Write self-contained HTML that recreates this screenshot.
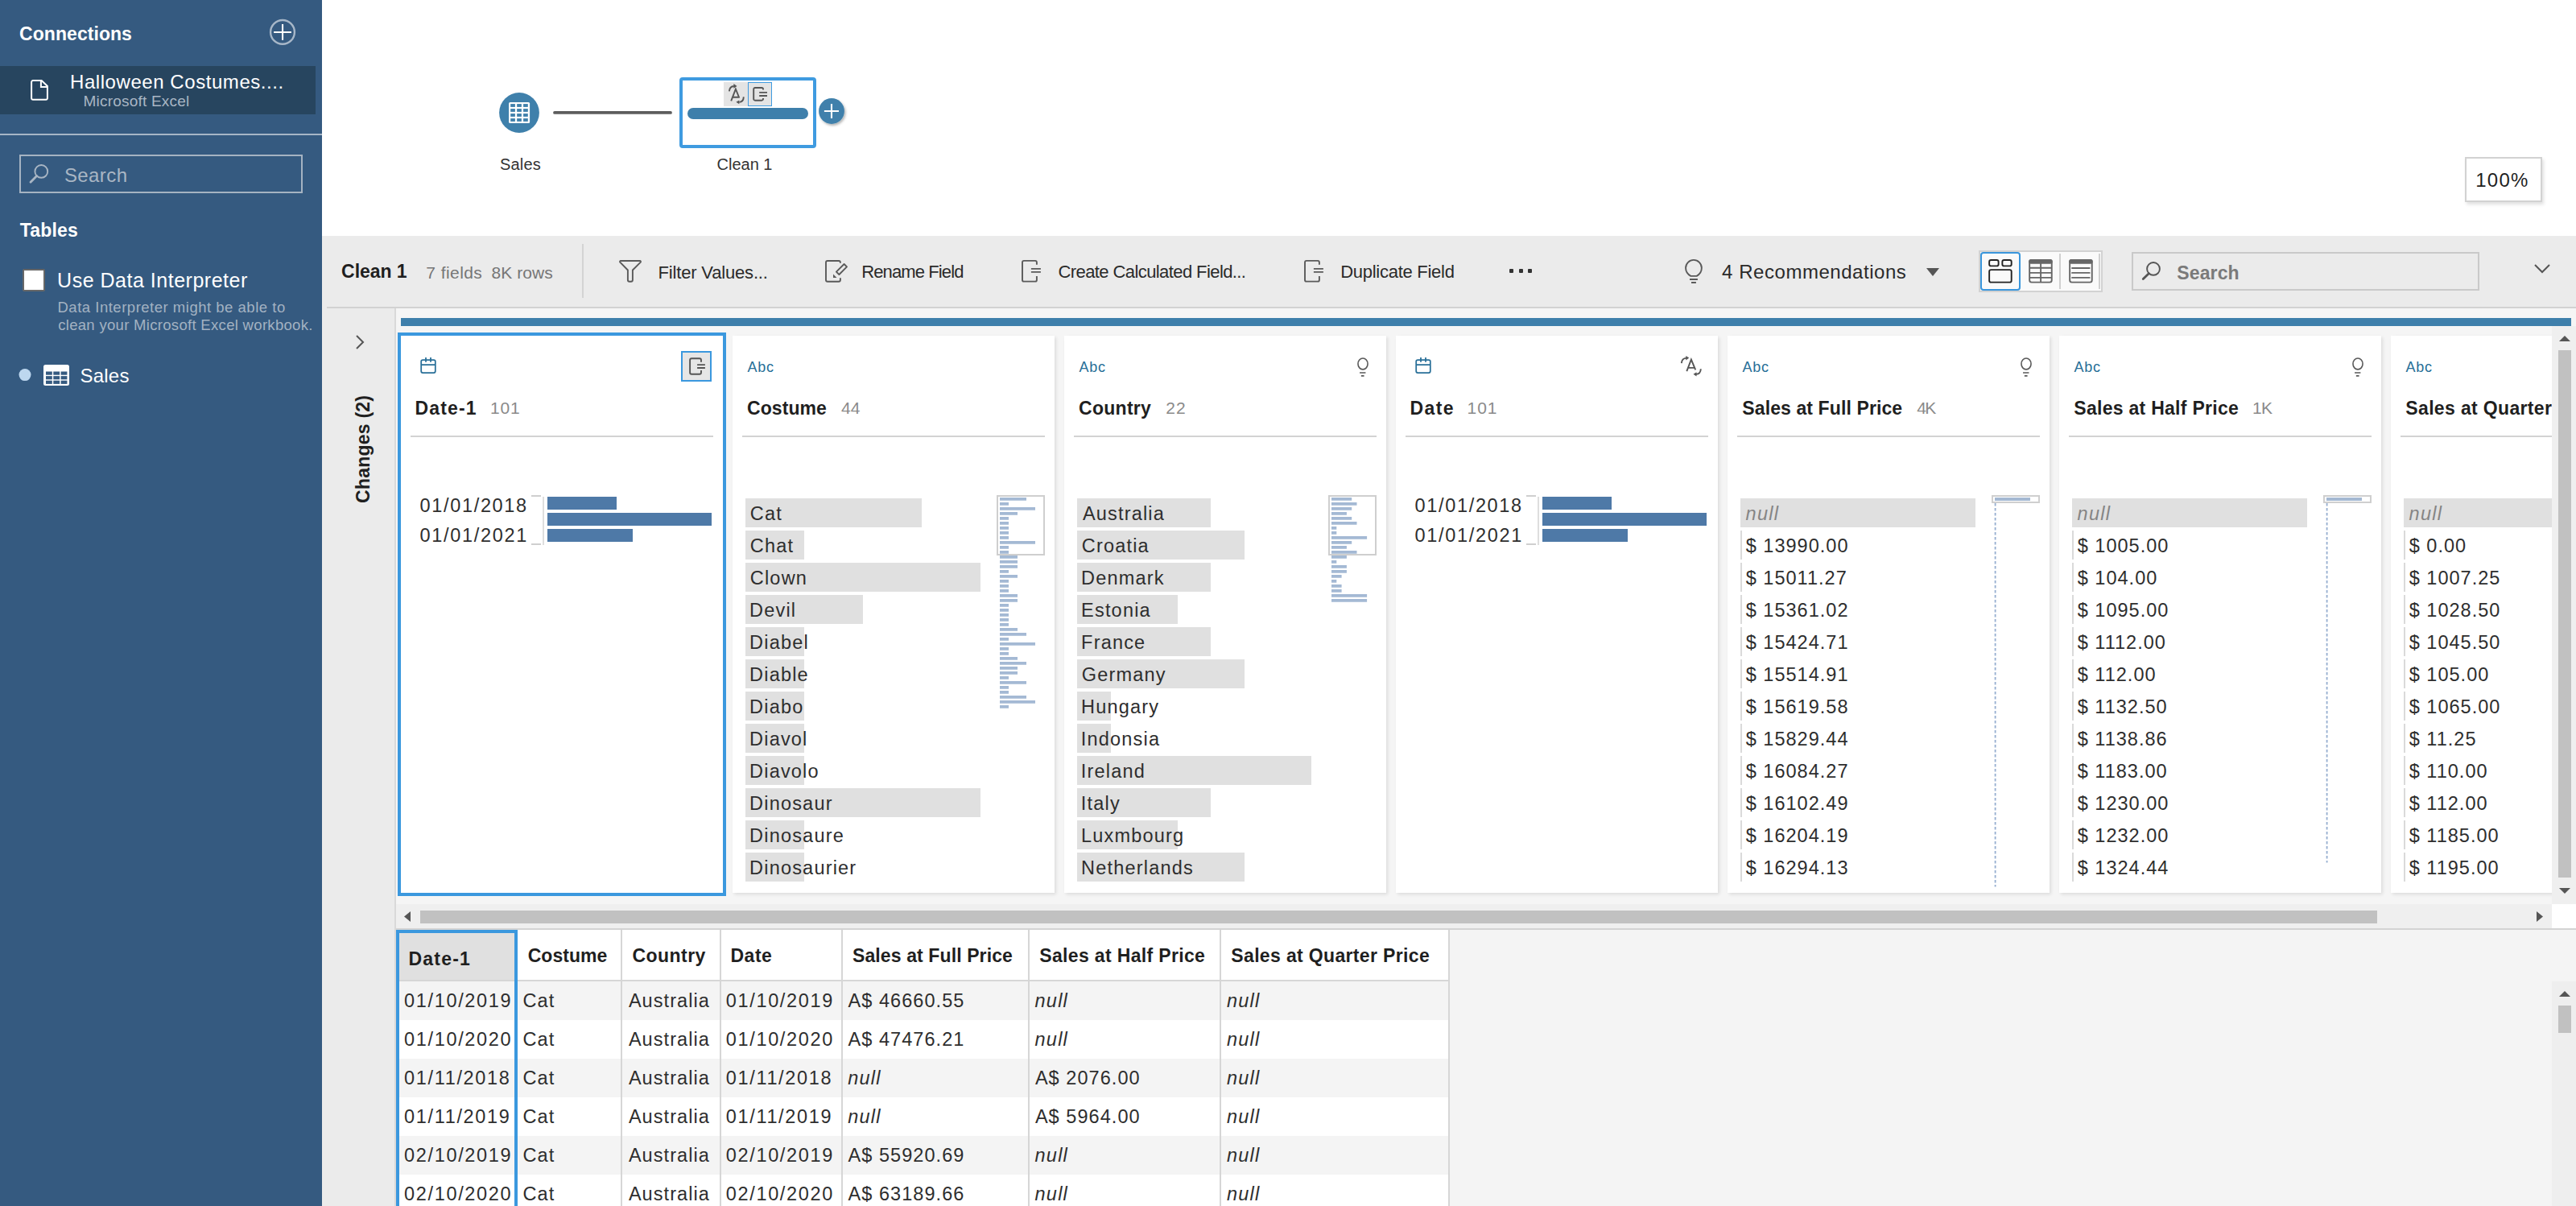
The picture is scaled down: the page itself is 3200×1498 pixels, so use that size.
<!DOCTYPE html>
<html><head><meta charset="utf-8"><title>Tableau Prep</title>
<style>
html,body{margin:0;padding:0;width:3200px;height:1498px;overflow:hidden;background:#fff;}
body{position:relative;font-family:"Liberation Sans",sans-serif;}
.t{position:absolute;white-space:nowrap;}
svg{overflow:visible;}
</style></head><body>
<div style="position:absolute;left:0px;top:0px;width:400px;height:1498px;background:#355a80;"></div>
<div class="t" style="left:24.1px;top:31.0px;font-size:23px;line-height:23px;color:#ffffff;font-weight:bold;letter-spacing:0.05px;">Connections</div>
<svg style="position:absolute;left:330px;top:20px;" width="42" height="42" viewBox="330 20 42 42"><circle cx="351" cy="39.9" r="14.9" fill="none" stroke="#a7b7c8" stroke-width="2.4"/><path d="M351.05 30.1V49.8M340.1 40.05H361.9" stroke="#fff" stroke-width="2.1"/></svg>
<div style="position:absolute;left:0px;top:82px;width:392px;height:60px;background:#27455f;"></div>
<svg style="position:absolute;left:30px;top:92px;" width="40" height="40" viewBox="30 92 40 40"><path d="M39.1 102V122a1.8 1.8 0 0 0 1.8 1.8H57.1a1.8 1.8 0 0 0 1.8-1.8V107L51.6 100.1H41a1.9 1.9 0 0 0-1.9 1.9Z" fill="none" stroke="#fff" stroke-width="2"/><path d="M50.9 100.1V107.9H58.9" fill="none" stroke="#fff" stroke-width="2"/></svg>
<div class="t" style="left:87.0px;top:90.2px;font-size:24px;line-height:24px;color:#ffffff;letter-spacing:0.56px;">Halloween Costumes....</div>
<div class="t" style="left:103.5px;top:116.4px;font-size:19px;line-height:19px;color:#a9b6c4;letter-spacing:0.21px;">Microsoft Excel</div>
<div style="position:absolute;left:0px;top:166px;width:400px;height:2px;background:#a6b6c6;"></div>
<div style="position:absolute;left:24px;top:192px;width:352px;height:48px;background:transparent;box-sizing:border-box;border:2px solid #a5b3c2;"></div>
<svg style="position:absolute;left:30px;top:198px;" width="40" height="40" viewBox="30 198 40 40"><circle cx="51.3" cy="212.9" r="7.9" fill="none" stroke="#a9b6c4" stroke-width="1.9"/><path d="M45.6 218.6L38 226.2" stroke="#a9b6c4" stroke-width="2.8" stroke-linecap="round"/></svg>
<div class="t" style="left:79.9px;top:206.2px;font-size:24px;line-height:24px;color:#a9b6c4;letter-spacing:0.42px;">Search</div>
<div class="t" style="left:24.8px;top:275.0px;font-size:23px;line-height:23px;color:#ffffff;font-weight:bold;letter-spacing:0.18px;">Tables</div>
<div style="position:absolute;left:28px;top:334px;width:28px;height:28px;background:#ffffff;box-sizing:border-box;border:2px solid #676767;border-radius:2px;"></div>
<div class="t" style="left:71.1px;top:336.3px;font-size:25px;line-height:25px;color:#ffffff;letter-spacing:0.51px;">Use Data Interpreter</div>
<div class="t" style="left:71.5px;top:373.3px;font-size:18.5px;line-height:18.5px;color:#a3b2c2;letter-spacing:0.51px;">Data Interpreter might be able to</div>
<div class="t" style="left:72.2px;top:395.4px;font-size:18.5px;line-height:18.5px;color:#a3b2c2;letter-spacing:0.31px;">clean your Microsoft Excel workbook.</div>
<svg style="position:absolute;left:23px;top:458px;" width="16" height="16" viewBox="0 0 16 16"><circle cx="8" cy="7.6" r="7.5" fill="#bdd7ef"/></svg>
<svg style="position:absolute;left:54px;top:453px;" width="32" height="26" viewBox="0 0 32 26"><rect x="0" y="0" width="32" height="26" rx="2.5" fill="#fff"/><rect x="3.0" y="8.5" width="7.8" height="4.2" fill="#355a80"/><rect x="12.3" y="8.5" width="7.8" height="4.2" fill="#355a80"/><rect x="21.6" y="8.5" width="7.8" height="4.2" fill="#355a80"/><rect x="3.0" y="14.1" width="7.8" height="4.2" fill="#355a80"/><rect x="12.3" y="14.1" width="7.8" height="4.2" fill="#355a80"/><rect x="21.6" y="14.1" width="7.8" height="4.2" fill="#355a80"/><rect x="3.0" y="19.7" width="7.8" height="4.2" fill="#355a80"/><rect x="12.3" y="19.7" width="7.8" height="4.2" fill="#355a80"/><rect x="21.6" y="19.7" width="7.8" height="4.2" fill="#355a80"/></svg>
<div class="t" style="left:99.4px;top:455.2px;font-size:24px;line-height:24px;color:#ffffff;letter-spacing:0.25px;">Sales</div>
<div style="position:absolute;left:400px;top:0px;width:2800px;height:293px;background:#ffffff;"></div>
<svg style="position:absolute;left:615px;top:110px;" width="60" height="60" viewBox="615 110 60 60"><circle cx="645" cy="140" r="24.9" fill="#3f80ab"/><rect x="632.1" y="126.9" width="26" height="26.2" rx="1.6" fill="#fff"/><rect x="634.20" y="129.10" width="5.7" height="3.8" fill="#3f80ab"/><rect x="642.15" y="129.10" width="5.7" height="3.8" fill="#3f80ab"/><rect x="650.10" y="129.10" width="5.7" height="3.8" fill="#3f80ab"/><rect x="634.20" y="135.10" width="5.7" height="3.8" fill="#3f80ab"/><rect x="642.15" y="135.10" width="5.7" height="3.8" fill="#3f80ab"/><rect x="650.10" y="135.10" width="5.7" height="3.8" fill="#3f80ab"/><rect x="634.20" y="141.10" width="5.7" height="3.8" fill="#3f80ab"/><rect x="642.15" y="141.10" width="5.7" height="3.8" fill="#3f80ab"/><rect x="650.10" y="141.10" width="5.7" height="3.8" fill="#3f80ab"/><rect x="634.20" y="147.10" width="5.7" height="3.8" fill="#3f80ab"/><rect x="642.15" y="147.10" width="5.7" height="3.8" fill="#3f80ab"/><rect x="650.10" y="147.10" width="5.7" height="3.8" fill="#3f80ab"/></svg>
<svg style="position:absolute;left:686px;top:136px;" width="150" height="8" viewBox="0 0 150 8"><line x1="3" y1="3.9" x2="147" y2="3.9" stroke="#5d5d5d" stroke-width="3.8" stroke-linecap="round"/></svg>
<div style="position:absolute;left:844px;top:96px;width:170px;height:88px;background:#fff;box-sizing:border-box;border:4px solid #3f9be0;border-radius:4px;"></div>
<div style="position:absolute;left:899px;top:102px;width:30px;height:30px;background:#e4e4e4;"></div>
<div style="position:absolute;left:929px;top:102px;width:30px;height:30px;background:#e4e4e4;box-sizing:border-box;border:1.5px solid #3f9be0;"></div>
<svg style="position:absolute;left:895px;top:98px;" width="70" height="38" viewBox="895 98 70 38"><g fill="none" stroke="#555" stroke-width="1.9"><path d="M908.2 125.4L913.9 110.6L918.3 121.5M910 120.7H918.5"/><path d="M905.9 113.4Q906.3 107.3 911.8 107"/><path d="M923.8 120.4Q923.5 126.6 918.3 126.9"/></g><path d="M911.4 104.1L915.5 107.1L911.4 109.7Z" fill="#555"/><path d="M918.3 124.5L914.4 126.8L918.3 129.2Z" fill="#555"/></svg>
<svg style="position:absolute;left:895px;top:98px;" width="70" height="38" viewBox="895 98 70 38"><g fill="none" stroke="#555" stroke-width="1.9"><path d="M948 111.6V110.8a1.8 1.8 0 0 0-1.8-1.8H938a1.8 1.8 0 0 0-1.8 1.8V122.9a1.8 1.8 0 0 0 1.8 1.8H946.2a1.8 1.8 0 0 0 1.8-1.8V122.1"/><path d="M943.2 114.9H953M943.2 119H953"/></g></svg>
<div style="position:absolute;left:854px;top:134px;width:150px;height:14px;background:#3e7fab;border-radius:7px;"></div>
<svg style="position:absolute;left:1010px;top:116px;" width="46" height="46" viewBox="1010 116 46 46"><defs><filter id="sh" x="-30%" y="-30%" width="160%" height="160%"><feDropShadow dx="1.5" dy="2" stdDeviation="1.6" flood-opacity="0.30"/></filter></defs><circle cx="1033" cy="138" r="15.9" fill="#3f80ab" filter="url(#sh)"/><path d="M1033 129V147.1M1023.9 138.05H1042" stroke="#fff" stroke-width="2.1"/></svg>
<div class="t" style="left:621.1px;top:193.6px;font-size:20px;line-height:20px;color:#333;letter-spacing:0.15px;">Sales</div>
<div class="t" style="left:890.5px;top:193.6px;font-size:20px;line-height:20px;color:#333;">Clean 1</div>
<div style="position:absolute;left:3062px;top:195px;width:96px;height:56px;background:#fff;box-sizing:border-box;border:2px solid #d2d2d2;box-shadow:2px 3px 4px rgba(0,0,0,0.12);"></div>
<div class="t" style="left:3075.2px;top:212.2px;font-size:24px;line-height:24px;color:#1f1f1f;letter-spacing:1.27px;">100%</div>
<div style="position:absolute;left:400px;top:293px;width:2800px;height:90px;background:#ebebeb;"></div>
<div style="position:absolute;left:406px;top:381px;width:2794px;height:1.6px;background:#d2d2d2;"></div>
<div class="t" style="left:424.1px;top:326.0px;font-size:23px;line-height:23px;color:#1f1f1f;font-weight:bold;letter-spacing:-0.05px;">Clean 1</div>
<div class="t" style="left:529.3px;top:327.7px;font-size:21px;line-height:21px;color:#767676;letter-spacing:0.43px;">7 fields</div>
<div class="t" style="left:610.6px;top:327.7px;font-size:21px;line-height:21px;color:#767676;letter-spacing:0.05px;">8K rows</div>
<div style="position:absolute;left:723px;top:303px;width:2px;height:67px;background:#d3d3d3;"></div>
<svg style="position:absolute;left:762px;top:315px;" width="40" height="40" viewBox="762 315 40 40"><path d="M771 324H795a1 1 0 0 1 .8 1.6L785.9 335.5V347.8a2 2 0 0 1-2 2H781.9a2 2 0 0 1-2-2V335.5L770.2 325.6a1 1 0 0 1 .8-1.6Z" fill="none" stroke="#5a5a5a" stroke-width="1.9" stroke-linejoin="round"/></svg>
<div class="t" style="left:817.5px;top:327.9px;font-size:22px;line-height:22px;color:#2a2a2a;letter-spacing:-0.17px;">Filter Values...</div>
<svg style="position:absolute;left:1020px;top:315px;" width="40" height="40" viewBox="1020 315 40 40"><g fill="none" stroke="#5a5a5a" stroke-width="1.9"><path d="M1043.9 326.8V326a2 2 0 0 0-2-2H1028a2 2 0 0 0-2 2V347.8a2 2 0 0 0 2 2H1041.9a2 2 0 0 0 2-2V345.2"/><path d="M1038.9 337.6L1048.6 328L1052 331.4L1042.4 341Z" stroke-linejoin="round"/></g><path d="M1035 340.5V345H1039.5Z" fill="#5a5a5a"/></svg>
<div class="t" style="left:1070.2px;top:327.3px;font-size:22px;line-height:22px;color:#2a2a2a;letter-spacing:-0.88px;">Rename Field</div>
<svg style="position:absolute;left:1265.1px;top:319.1px;" width="34" height="36" viewBox="1265.1 319.1 34 36"><g transform="translate(0 0)" fill="none" stroke="#5a5a5a" stroke-width="1.9"><path d="M1288 328.8V326a2 2 0 0 0-2-2H1272.1a2 2 0 0 0-2 2V347.75a2 2 0 0 0 2 2H1286a2 2 0 0 0 2-2V343"/><path d="M1281 334H1293M1281 338H1293"/></g></svg>
<div class="t" style="left:1314.5px;top:327.3px;font-size:22px;line-height:22px;color:#2a2a2a;letter-spacing:-0.59px;">Create Calculated Field...</div>
<svg style="position:absolute;left:1616.3px;top:319.1px;" width="34" height="36" viewBox="1265.1 319.1 34 36"><g transform="translate(0 0)" fill="none" stroke="#5a5a5a" stroke-width="1.9"><path d="M1288 328.8V326a2 2 0 0 0-2-2H1272.1a2 2 0 0 0-2 2V347.75a2 2 0 0 0 2 2H1286a2 2 0 0 0 2-2V343"/><path d="M1281 334H1293M1281 338H1293"/></g></svg>
<div class="t" style="left:1665.2px;top:327.3px;font-size:22px;line-height:22px;color:#2a2a2a;letter-spacing:-0.27px;">Duplicate Field</div>
<div style="position:absolute;left:1875px;top:333.5px;width:5px;height:5px;background:#333;border-radius:1px;"></div>
<div style="position:absolute;left:1886.5px;top:333.5px;width:5px;height:5px;background:#333;border-radius:1px;"></div>
<div style="position:absolute;left:1898px;top:333.5px;width:5px;height:5px;background:#333;border-radius:1px;"></div>
<svg style="position:absolute;left:2084px;top:315px;" width="40" height="40" viewBox="2084 315 40 40"><g fill="none" stroke="#5a5a5a" stroke-width="1.9"><path d="M2100.3 342.9C2096.3 340.6 2094.05 337 2094.05 332.8A9.9 9.9 0 0 1 2113.85 332.8C2113.85 337 2111.7 340.6 2107.7 342.9Z"/><path d="M2099 347H2108.9M2101 351H2106.9"/></g></svg>
<div class="t" style="left:2139.1px;top:326.1px;font-size:24px;line-height:24px;color:#2a2a2a;letter-spacing:0.54px;">4 Recommendations</div>
<svg style="position:absolute;left:2392px;top:332px;" width="18" height="12" viewBox="0 0 18 12"><path d="M1 1h16l-8 10z" fill="#555"/></svg>
<div style="position:absolute;left:2458px;top:311px;width:154px;height:52px;background:#fafafa;box-sizing:border-box;border:2px solid #d2d2d2;"></div>
<div style="position:absolute;left:2460px;top:313px;width:50px;height:48px;background:#fafafa;box-sizing:border-box;border:2px solid #3a96dc;border-radius:4px;"></div>
<div style="position:absolute;left:2557.7px;top:315px;width:2px;height:44px;background:#d0d0d0;"></div>
<div style="position:absolute;left:2607.4px;top:315px;width:2px;height:44px;background:#d0d0d0;"></div>
<svg style="position:absolute;left:2455px;top:305px;" width="160" height="63" viewBox="2455 305 160 63"><g fill="none" stroke="#222" stroke-width="1.9"><rect x="2471.15" y="323" width="11.45" height="7.4" rx="2.2"/><rect x="2487.35" y="323" width="11.35" height="7.4" rx="2.2"/><rect x="2471.15" y="335.15" width="27.55" height="15.45" rx="2.2"/></g></svg>
<svg style="position:absolute;left:2455px;top:305px;" width="160" height="63" viewBox="2455 305 160 63"><rect x="2521.15" y="322.95" width="27.6" height="27.7" rx="2.6" fill="none" stroke="#666" stroke-width="1.9"/><rect x="2520.2" y="322" width="29.5" height="5.7" rx="2.6" fill="#666"/><path d="M2521 332.8H2549M2521 338.9H2549M2521 344.9H2549M2535.1 327H2535.1V350" stroke="#666" stroke-width="1.9" fill="none"/></svg>
<svg style="position:absolute;left:2455px;top:305px;" width="160" height="63" viewBox="2455 305 160 63"><rect x="2571.15" y="322.95" width="27.6" height="27.7" rx="2.6" fill="none" stroke="#666" stroke-width="1.9"/><rect x="2570.2" y="322" width="29.5" height="5.7" rx="2.6" fill="#666"/><path d="M2574 333H2595.7M2574 338.9H2595.7M2574 344.9H2595.7" stroke="#666" stroke-width="1.9" fill="none" stroke-linecap="round"/></svg>
<div style="position:absolute;left:2648px;top:313px;width:432px;height:48px;background:transparent;box-sizing:border-box;border:2px solid #c9c9c9;"></div>
<svg style="position:absolute;left:2652px;top:318px;" width="40" height="40" viewBox="2652 318 40 40"><circle cx="2675" cy="333.9" r="7.9" fill="none" stroke="#555" stroke-width="1.9"/><path d="M2669.3 339.7L2662.3 346.6" stroke="#555" stroke-width="2.8" stroke-linecap="round"/></svg>
<div class="t" style="left:2704.3px;top:327.6px;font-size:23px;line-height:23px;color:#7a7a7a;font-weight:bold;letter-spacing:0.12px;">Search</div>
<svg style="position:absolute;left:3147px;top:327px;" width="22" height="15" viewBox="0 0 22 15"><path d="M2 2l9 9 9-9" fill="none" stroke="#555" stroke-width="2"/></svg>
<div style="position:absolute;left:400px;top:383px;width:91px;height:1115px;background:#ebebeb;"></div>
<div style="position:absolute;left:490px;top:383px;width:1.5px;height:1115px;background:#d9d9d9;"></div>
<svg style="position:absolute;left:440px;top:414px;" width="16" height="22" viewBox="0 0 16 22"><path d="M3 3l8 8-8 8" fill="none" stroke="#555" stroke-width="2"/></svg>
<div class="t" style="left:458.5px;top:624px;transform-origin:0 0;transform:rotate(-90deg);"><div style="position:relative;"><div class="t" style="white-space:nowrap;left:-0.9px;top:-19.0px;font-size:23px;line-height:23px;color:#1f1f1f;font-weight:bold;letter-spacing:0.22px;">Changes (2)</div>
</div></div>
<div style="position:absolute;left:491.5px;top:383px;width:2708.5px;height:770px;background:#f5f5f5;"></div>
<div style="position:absolute;left:498px;top:395px;width:2696px;height:10px;background:#3e7fab;"></div>
<div style="position:absolute;left:494px;top:413px;width:408px;height:700px;background:#fff;box-sizing:border-box;border:4px solid #3b98de;"></div>
<svg style="position:absolute;left:518px;top:440px;" width="28" height="28" viewBox="518 440 28 28"><g fill="none" stroke="#286f98" stroke-width="1.75"><path d="M523.2 449V461a2 2 0 0 0 2 2H538.8a2 2 0 0 0 2-2V449a2 2 0 0 0-2-2H525.2a2 2 0 0 0-2 2Z"/><path d="M523.2 453H540.8M529 444V449.7M535 444V449.7"/></g></svg>
<div style="position:absolute;left:846px;top:436px;width:38px;height:38px;background:#e6e6e6;box-sizing:border-box;border:2px solid #3b98de;"></div>
<svg style="position:absolute;left:850px;top:440px;" width="30" height="30" viewBox="850 440 30 30"><g fill="none" stroke="#555" stroke-width="1.9"><path d="M871 449.7V447.2a2 2 0 0 0-2-2H859.1a2 2 0 0 0-2 2V462.8a2 2 0 0 0 2 2H869a2 2 0 0 0 2-2V460"/><path d="M866.1 453.1H875.9M866.1 457H875.9"/></g></svg>
<div class="t" style="left:515.5px;top:496.0px;font-size:23px;line-height:23px;color:#1f1f1f;font-weight:bold;letter-spacing:1.16px;">Date-1</div>
<div class="t" style="left:608.9px;top:496.2px;font-size:21px;line-height:21px;color:#8a8a8a;letter-spacing:0.90px;">101</div>
<div style="position:absolute;left:510px;top:541px;width:376px;height:2px;background:#d3d3d3;"></div>
<div class="t" style="left:521.6px;top:616.6px;font-size:23.5px;line-height:23.5px;color:#2e2e2e;letter-spacing:1.66px;">01/01/2018</div>
<div class="t" style="left:521.6px;top:653.6px;font-size:23.5px;line-height:23.5px;color:#2e2e2e;letter-spacing:1.68px;">01/01/2021</div>
<div style="position:absolute;left:660px;top:615px;width:12px;height:2px;background:#cfcfcf;"></div>
<div style="position:absolute;left:660px;top:675px;width:12px;height:2px;background:#cfcfcf;"></div>
<div style="position:absolute;left:674px;top:617px;width:2px;height:60px;background:#dedede;"></div>
<div style="position:absolute;left:680px;top:617px;width:86px;height:16px;background:#4e79a7;"></div>
<div style="position:absolute;left:680px;top:637px;width:204px;height:16px;background:#4e79a7;"></div>
<div style="position:absolute;left:680px;top:657px;width:106px;height:16px;background:#4e79a7;"></div>
<div style="position:absolute;left:910px;top:417px;width:400px;height:692px;background:#fff;box-shadow:2px 2px 4px rgba(0,0,0,0.10);"></div>
<div class="t" style="left:928.5px;top:447.3px;font-size:18px;line-height:18px;color:#286f98;letter-spacing:0.75px;">Abc</div>
<div class="t" style="left:928.1px;top:496.0px;font-size:23px;line-height:23px;color:#1f1f1f;font-weight:bold;letter-spacing:0.05px;">Costume</div>
<div class="t" style="left:1045.0px;top:496.2px;font-size:21px;line-height:21px;color:#8a8a8a;">44</div>
<div style="position:absolute;left:922px;top:541px;width:376px;height:2px;background:#d3d3d3;"></div>
<div style="position:absolute;left:926px;top:619px;width:219px;height:36px;background:#e0e0e0;"></div>
<div class="t" style="left:931.8px;top:626.6px;font-size:23.5px;line-height:23.5px;color:#2e2e2e;letter-spacing:1.19px;">Cat</div>
<div style="position:absolute;left:926px;top:659px;width:73px;height:36px;background:#e0e0e0;"></div>
<div class="t" style="left:931.8px;top:666.6px;font-size:23.5px;line-height:23.5px;color:#2e2e2e;letter-spacing:1.19px;">Chat</div>
<div style="position:absolute;left:926px;top:699px;width:292px;height:36px;background:#e0e0e0;"></div>
<div class="t" style="left:931.8px;top:706.6px;font-size:23.5px;line-height:23.5px;color:#2e2e2e;letter-spacing:1.19px;">Clown</div>
<div style="position:absolute;left:926px;top:739px;width:146px;height:36px;background:#e0e0e0;"></div>
<div class="t" style="left:931.1px;top:746.6px;font-size:23.5px;line-height:23.5px;color:#2e2e2e;letter-spacing:1.19px;">Devil</div>
<div style="position:absolute;left:926px;top:779px;width:73px;height:36px;background:#e0e0e0;"></div>
<div class="t" style="left:931.1px;top:786.6px;font-size:23.5px;line-height:23.5px;color:#2e2e2e;letter-spacing:1.19px;">Diabel</div>
<div style="position:absolute;left:926px;top:819px;width:73px;height:36px;background:#e0e0e0;"></div>
<div class="t" style="left:931.1px;top:826.6px;font-size:23.5px;line-height:23.5px;color:#2e2e2e;letter-spacing:1.19px;">Diable</div>
<div style="position:absolute;left:926px;top:859px;width:73px;height:36px;background:#e0e0e0;"></div>
<div class="t" style="left:931.1px;top:866.6px;font-size:23.5px;line-height:23.5px;color:#2e2e2e;letter-spacing:1.19px;">Diabo</div>
<div style="position:absolute;left:926px;top:899px;width:73px;height:36px;background:#e0e0e0;"></div>
<div class="t" style="left:931.1px;top:906.6px;font-size:23.5px;line-height:23.5px;color:#2e2e2e;letter-spacing:1.19px;">Diavol</div>
<div style="position:absolute;left:926px;top:939px;width:73px;height:36px;background:#e0e0e0;"></div>
<div class="t" style="left:931.1px;top:946.6px;font-size:23.5px;line-height:23.5px;color:#2e2e2e;letter-spacing:1.19px;">Diavolo</div>
<div style="position:absolute;left:926px;top:979px;width:292px;height:36px;background:#e0e0e0;"></div>
<div class="t" style="left:931.1px;top:986.6px;font-size:23.5px;line-height:23.5px;color:#2e2e2e;letter-spacing:1.19px;">Dinosaur</div>
<div style="position:absolute;left:926px;top:1019px;width:73px;height:36px;background:#e0e0e0;"></div>
<div class="t" style="left:931.1px;top:1026.6px;font-size:23.5px;line-height:23.5px;color:#2e2e2e;letter-spacing:1.19px;">Dinosaure</div>
<div style="position:absolute;left:926px;top:1059px;width:73px;height:36px;background:#e0e0e0;"></div>
<div class="t" style="left:931.1px;top:1066.6px;font-size:23.5px;line-height:23.5px;color:#2e2e2e;letter-spacing:1.19px;">Dinosaurier</div>
<svg style="position:absolute;left:1242px;top:618.1px;" width="46" height="266" viewBox="0 0 46 266"><rect x="0" y="0.0" width="33.0" height="3.75" fill="#a4b9d4"/><rect x="0" y="6.0" width="11.0" height="3.75" fill="#a4b9d4"/><rect x="0" y="12.0" width="44.0" height="3.75" fill="#a4b9d4"/><rect x="0" y="18.0" width="22.0" height="3.75" fill="#a4b9d4"/><rect x="0" y="24.0" width="11.0" height="3.75" fill="#a4b9d4"/><rect x="0" y="30.0" width="11.0" height="3.75" fill="#a4b9d4"/><rect x="0" y="36.0" width="11.0" height="3.75" fill="#a4b9d4"/><rect x="0" y="42.0" width="11.0" height="3.75" fill="#a4b9d4"/><rect x="0" y="48.0" width="11.0" height="3.75" fill="#a4b9d4"/><rect x="0" y="54.0" width="44.0" height="3.75" fill="#a4b9d4"/><rect x="0" y="60.0" width="11.0" height="3.75" fill="#a4b9d4"/><rect x="0" y="66.0" width="11.0" height="3.75" fill="#a4b9d4"/><rect x="0" y="72.0" width="22.0" height="3.75" fill="#a4b9d4"/><rect x="0" y="78.0" width="22.0" height="3.75" fill="#a4b9d4"/><rect x="0" y="84.0" width="22.0" height="3.75" fill="#a4b9d4"/><rect x="0" y="90.0" width="11.0" height="3.75" fill="#a4b9d4"/><rect x="0" y="96.0" width="22.0" height="3.75" fill="#a4b9d4"/><rect x="0" y="102.0" width="11.0" height="3.75" fill="#a4b9d4"/><rect x="0" y="108.0" width="11.0" height="3.75" fill="#a4b9d4"/><rect x="0" y="114.0" width="11.0" height="3.75" fill="#a4b9d4"/><rect x="0" y="120.0" width="22.0" height="3.75" fill="#a4b9d4"/><rect x="0" y="126.0" width="22.0" height="3.75" fill="#a4b9d4"/><rect x="0" y="132.0" width="11.0" height="3.75" fill="#a4b9d4"/><rect x="0" y="138.0" width="11.0" height="3.75" fill="#a4b9d4"/><rect x="0" y="144.0" width="11.0" height="3.75" fill="#a4b9d4"/><rect x="0" y="150.0" width="11.0" height="3.75" fill="#a4b9d4"/><rect x="0" y="156.0" width="11.0" height="3.75" fill="#a4b9d4"/><rect x="0" y="162.0" width="22.0" height="3.75" fill="#a4b9d4"/><rect x="0" y="168.0" width="33.0" height="3.75" fill="#a4b9d4"/><rect x="0" y="174.0" width="11.0" height="3.75" fill="#a4b9d4"/><rect x="0" y="180.0" width="44.0" height="3.75" fill="#a4b9d4"/><rect x="0" y="186.0" width="11.0" height="3.75" fill="#a4b9d4"/><rect x="0" y="192.0" width="11.0" height="3.75" fill="#a4b9d4"/><rect x="0" y="198.0" width="22.0" height="3.75" fill="#a4b9d4"/><rect x="0" y="204.0" width="33.0" height="3.75" fill="#a4b9d4"/><rect x="0" y="210.0" width="22.0" height="3.75" fill="#a4b9d4"/><rect x="0" y="216.0" width="22.0" height="3.75" fill="#a4b9d4"/><rect x="0" y="222.0" width="11.0" height="3.75" fill="#a4b9d4"/><rect x="0" y="228.0" width="33.0" height="3.75" fill="#a4b9d4"/><rect x="0" y="234.0" width="11.0" height="3.75" fill="#a4b9d4"/><rect x="0" y="240.0" width="11.0" height="3.75" fill="#a4b9d4"/><rect x="0" y="246.0" width="33.0" height="3.75" fill="#a4b9d4"/><rect x="0" y="252.0" width="44.0" height="3.75" fill="#a4b9d4"/><rect x="0" y="258.0" width="11.0" height="3.75" fill="#a4b9d4"/></svg>
<div style="position:absolute;left:1238px;top:615px;width:60px;height:75px;background:transparent;box-sizing:border-box;border:2px solid #cfcfcf;"></div>
<div style="position:absolute;left:1322px;top:417px;width:400px;height:692px;background:#fff;box-shadow:2px 2px 4px rgba(0,0,0,0.10);"></div>
<div class="t" style="left:1340.5px;top:447.3px;font-size:18px;line-height:18px;color:#286f98;letter-spacing:0.75px;">Abc</div>
<svg style="position:absolute;left:1681.15px;top:440px;" width="24" height="30" viewBox="1681.15 440 24 30"><g fill="none" stroke="#5a5a5a" stroke-width="1.6"><ellipse cx="1693.15" cy="451.95" rx="6.05" ry="6.95"/><path d="M1689.20 463H1696.60M1691.00 466.9H1694.70"/></g></svg>
<div class="t" style="left:1340.1px;top:496.0px;font-size:23px;line-height:23px;color:#1f1f1f;font-weight:bold;letter-spacing:0.27px;">Country</div>
<div class="t" style="left:1448.3px;top:496.2px;font-size:21px;line-height:21px;color:#8a8a8a;letter-spacing:1.00px;">22</div>
<div style="position:absolute;left:1334px;top:541px;width:376px;height:2px;background:#d3d3d3;"></div>
<div style="position:absolute;left:1338px;top:619px;width:166.4px;height:36px;background:#e0e0e0;"></div>
<div class="t" style="left:1344.9px;top:626.6px;font-size:23.5px;line-height:23.5px;color:#2e2e2e;letter-spacing:1.19px;">Australia</div>
<div style="position:absolute;left:1338px;top:659px;width:208.0px;height:36px;background:#e0e0e0;"></div>
<div class="t" style="left:1343.8px;top:666.6px;font-size:23.5px;line-height:23.5px;color:#2e2e2e;letter-spacing:1.19px;">Croatia</div>
<div style="position:absolute;left:1338px;top:699px;width:166.4px;height:36px;background:#e0e0e0;"></div>
<div class="t" style="left:1343.1px;top:706.6px;font-size:23.5px;line-height:23.5px;color:#2e2e2e;letter-spacing:1.19px;">Denmark</div>
<div style="position:absolute;left:1338px;top:739px;width:124.80000000000001px;height:36px;background:#e0e0e0;"></div>
<div class="t" style="left:1343.1px;top:746.6px;font-size:23.5px;line-height:23.5px;color:#2e2e2e;letter-spacing:1.19px;">Estonia</div>
<div style="position:absolute;left:1338px;top:779px;width:166.4px;height:36px;background:#e0e0e0;"></div>
<div class="t" style="left:1343.1px;top:786.6px;font-size:23.5px;line-height:23.5px;color:#2e2e2e;letter-spacing:1.19px;">France</div>
<div style="position:absolute;left:1338px;top:819px;width:208.0px;height:36px;background:#e0e0e0;"></div>
<div class="t" style="left:1343.8px;top:826.6px;font-size:23.5px;line-height:23.5px;color:#2e2e2e;letter-spacing:1.19px;">Germany</div>
<div style="position:absolute;left:1338px;top:859px;width:41.6px;height:36px;background:#e0e0e0;"></div>
<div class="t" style="left:1343.1px;top:866.6px;font-size:23.5px;line-height:23.5px;color:#2e2e2e;letter-spacing:1.19px;">Hungary</div>
<div style="position:absolute;left:1338px;top:899px;width:41.6px;height:36px;background:#e0e0e0;"></div>
<div class="t" style="left:1342.8px;top:906.6px;font-size:23.5px;line-height:23.5px;color:#2e2e2e;letter-spacing:1.19px;">Indonsia</div>
<div style="position:absolute;left:1338px;top:939px;width:291.2px;height:36px;background:#e0e0e0;"></div>
<div class="t" style="left:1342.8px;top:946.6px;font-size:23.5px;line-height:23.5px;color:#2e2e2e;letter-spacing:1.19px;">Ireland</div>
<div style="position:absolute;left:1338px;top:979px;width:166.4px;height:36px;background:#e0e0e0;"></div>
<div class="t" style="left:1342.8px;top:986.6px;font-size:23.5px;line-height:23.5px;color:#2e2e2e;letter-spacing:1.19px;">Italy</div>
<div style="position:absolute;left:1338px;top:1019px;width:124.80000000000001px;height:36px;background:#e0e0e0;"></div>
<div class="t" style="left:1343.1px;top:1026.6px;font-size:23.5px;line-height:23.5px;color:#2e2e2e;letter-spacing:1.19px;">Luxmbourg</div>
<div style="position:absolute;left:1338px;top:1059px;width:208.0px;height:36px;background:#e0e0e0;"></div>
<div class="t" style="left:1343.1px;top:1066.6px;font-size:23.5px;line-height:23.5px;color:#2e2e2e;letter-spacing:1.19px;">Netherlands</div>
<svg style="position:absolute;left:1654px;top:618.1px;" width="46" height="136" viewBox="0 0 46 136"><rect x="0" y="0.0" width="25.2" height="3.75" fill="#a4b9d4"/><rect x="0" y="6.0" width="31.5" height="3.75" fill="#a4b9d4"/><rect x="0" y="12.0" width="25.2" height="3.75" fill="#a4b9d4"/><rect x="0" y="18.0" width="18.9" height="3.75" fill="#a4b9d4"/><rect x="0" y="24.0" width="25.2" height="3.75" fill="#a4b9d4"/><rect x="0" y="30.0" width="31.5" height="3.75" fill="#a4b9d4"/><rect x="0" y="36.0" width="6.3" height="3.75" fill="#a4b9d4"/><rect x="0" y="42.0" width="6.3" height="3.75" fill="#a4b9d4"/><rect x="0" y="48.0" width="44.1" height="3.75" fill="#a4b9d4"/><rect x="0" y="54.0" width="25.2" height="3.75" fill="#a4b9d4"/><rect x="0" y="60.0" width="18.9" height="3.75" fill="#a4b9d4"/><rect x="0" y="66.0" width="31.5" height="3.75" fill="#a4b9d4"/><rect x="0" y="72.0" width="18.9" height="3.75" fill="#a4b9d4"/><rect x="0" y="78.0" width="6.3" height="3.75" fill="#a4b9d4"/><rect x="0" y="84.0" width="18.9" height="3.75" fill="#a4b9d4"/><rect x="0" y="90.0" width="18.9" height="3.75" fill="#a4b9d4"/><rect x="0" y="96.0" width="12.6" height="3.75" fill="#a4b9d4"/><rect x="0" y="102.0" width="6.3" height="3.75" fill="#a4b9d4"/><rect x="0" y="108.0" width="12.6" height="3.75" fill="#a4b9d4"/><rect x="0" y="114.0" width="12.6" height="3.75" fill="#a4b9d4"/><rect x="0" y="120.0" width="44.1" height="3.75" fill="#a4b9d4"/><rect x="0" y="126.0" width="44.1" height="3.75" fill="#a4b9d4"/></svg>
<div style="position:absolute;left:1650px;top:615px;width:60px;height:75px;background:transparent;box-sizing:border-box;border:2px solid #cfcfcf;"></div>
<div style="position:absolute;left:1734px;top:417px;width:400px;height:692px;background:#fff;box-shadow:2px 2px 4px rgba(0,0,0,0.10);"></div>
<svg style="position:absolute;left:1754px;top:440px;" width="28" height="28" viewBox="1754 440 28 28"><g fill="none" stroke="#286f98" stroke-width="1.75"><path d="M1759.2 449V461a2 2 0 0 0 2 2H1774.8a2 2 0 0 0 2-2V449a2 2 0 0 0-2-2H1761.2a2 2 0 0 0-2 2Z"/><path d="M1759.2 453H1776.8M1765 444V449.7M1771 444V449.7"/></g></svg>
<svg style="position:absolute;left:2080px;top:435px;" width="44" height="40" viewBox="2080 435 44 40"><g transform="translate(0 0)"><g fill="none" stroke="#555" stroke-width="1.9"><path d="M2095.3 461.2L2100.9 446.6L2106.2 459.4M2097.2 456.9H2104.5"/><path d="M2088.8 451.2Q2089.3 445 2095 444.6"/><path d="M2112.8 458.2Q2112.5 464.6 2107 464.8"/></g><path d="M2094.3 442.1L2098.2 444.6L2094.3 447.4Z" fill="#555"/><path d="M2107.5 462.2L2103.5 464.8L2107.5 467.5Z" fill="#555"/></g></svg>
<div class="t" style="left:1751.5px;top:496.0px;font-size:23px;line-height:23px;color:#1f1f1f;font-weight:bold;letter-spacing:1.37px;">Date</div>
<div class="t" style="left:1822.6px;top:496.2px;font-size:21px;line-height:21px;color:#8a8a8a;letter-spacing:0.90px;">101</div>
<div style="position:absolute;left:1746px;top:541px;width:376px;height:2px;background:#d3d3d3;"></div>
<div class="t" style="left:1757.6px;top:616.6px;font-size:23.5px;line-height:23.5px;color:#2e2e2e;letter-spacing:1.66px;">01/01/2018</div>
<div class="t" style="left:1757.6px;top:653.6px;font-size:23.5px;line-height:23.5px;color:#2e2e2e;letter-spacing:1.68px;">01/01/2021</div>
<div style="position:absolute;left:1896px;top:615px;width:12px;height:2px;background:#cfcfcf;"></div>
<div style="position:absolute;left:1896px;top:675px;width:12px;height:2px;background:#cfcfcf;"></div>
<div style="position:absolute;left:1910px;top:617px;width:2px;height:60px;background:#dedede;"></div>
<div style="position:absolute;left:1916px;top:617px;width:86px;height:16px;background:#4e79a7;"></div>
<div style="position:absolute;left:1916px;top:637px;width:204px;height:16px;background:#4e79a7;"></div>
<div style="position:absolute;left:1916px;top:657px;width:106px;height:16px;background:#4e79a7;"></div>
<div style="position:absolute;left:2146px;top:417px;width:400px;height:692px;background:#fff;box-shadow:2px 2px 4px rgba(0,0,0,0.10);"></div>
<div class="t" style="left:2164.5px;top:447.3px;font-size:18px;line-height:18px;color:#286f98;letter-spacing:0.75px;">Abc</div>
<svg style="position:absolute;left:2505.15px;top:440px;" width="24" height="30" viewBox="2505.15 440 24 30"><g fill="none" stroke="#5a5a5a" stroke-width="1.6"><ellipse cx="2517.15" cy="451.95" rx="6.05" ry="6.95"/><path d="M2513.20 463H2520.60M2515.00 466.9H2518.70"/></g></svg>
<div class="t" style="left:2164.3px;top:496.0px;font-size:23px;line-height:23px;color:#1f1f1f;font-weight:bold;letter-spacing:0.11px;">Sales at Full Price</div>
<div class="t" style="left:2381.3px;top:496.2px;font-size:21px;line-height:21px;color:#8a8a8a;letter-spacing:-1.70px;">4K</div>
<div style="position:absolute;left:2158px;top:541px;width:376px;height:2px;background:#d3d3d3;"></div>
<div style="position:absolute;left:2162px;top:619px;width:292px;height:36px;background:#e0e0e0;"></div>
<div class="t" style="left:2168.6px;top:626.6px;font-size:23.5px;line-height:23.5px;color:#858585;font-style:italic;letter-spacing:1.30px;">null</div>
<div style="position:absolute;left:2162px;top:659px;width:2px;height:36px;background:#dadada;"></div>
<div class="t" style="left:2168.7px;top:666.6px;font-size:23.5px;line-height:23.5px;color:#2e2e2e;letter-spacing:1.02px;">$ 13990.00</div>
<div style="position:absolute;left:2162px;top:699px;width:2px;height:36px;background:#dadada;"></div>
<div class="t" style="left:2168.7px;top:706.6px;font-size:23.5px;line-height:23.5px;color:#2e2e2e;letter-spacing:1.02px;">$ 15011.27</div>
<div style="position:absolute;left:2162px;top:739px;width:2px;height:36px;background:#dadada;"></div>
<div class="t" style="left:2168.7px;top:746.6px;font-size:23.5px;line-height:23.5px;color:#2e2e2e;letter-spacing:1.02px;">$ 15361.02</div>
<div style="position:absolute;left:2162px;top:779px;width:2px;height:36px;background:#dadada;"></div>
<div class="t" style="left:2168.7px;top:786.6px;font-size:23.5px;line-height:23.5px;color:#2e2e2e;letter-spacing:1.02px;">$ 15424.71</div>
<div style="position:absolute;left:2162px;top:819px;width:2px;height:36px;background:#dadada;"></div>
<div class="t" style="left:2168.7px;top:826.6px;font-size:23.5px;line-height:23.5px;color:#2e2e2e;letter-spacing:1.02px;">$ 15514.91</div>
<div style="position:absolute;left:2162px;top:859px;width:2px;height:36px;background:#dadada;"></div>
<div class="t" style="left:2168.7px;top:866.6px;font-size:23.5px;line-height:23.5px;color:#2e2e2e;letter-spacing:1.02px;">$ 15619.58</div>
<div style="position:absolute;left:2162px;top:899px;width:2px;height:36px;background:#dadada;"></div>
<div class="t" style="left:2168.7px;top:906.6px;font-size:23.5px;line-height:23.5px;color:#2e2e2e;letter-spacing:1.02px;">$ 15829.44</div>
<div style="position:absolute;left:2162px;top:939px;width:2px;height:36px;background:#dadada;"></div>
<div class="t" style="left:2168.7px;top:946.6px;font-size:23.5px;line-height:23.5px;color:#2e2e2e;letter-spacing:1.02px;">$ 16084.27</div>
<div style="position:absolute;left:2162px;top:979px;width:2px;height:36px;background:#dadada;"></div>
<div class="t" style="left:2168.7px;top:986.6px;font-size:23.5px;line-height:23.5px;color:#2e2e2e;letter-spacing:1.02px;">$ 16102.49</div>
<div style="position:absolute;left:2162px;top:1019px;width:2px;height:36px;background:#dadada;"></div>
<div class="t" style="left:2168.7px;top:1026.6px;font-size:23.5px;line-height:23.5px;color:#2e2e2e;letter-spacing:1.02px;">$ 16204.19</div>
<div style="position:absolute;left:2162px;top:1059px;width:2px;height:36px;background:#dadada;"></div>
<div class="t" style="left:2168.7px;top:1066.6px;font-size:23.5px;line-height:23.5px;color:#2e2e2e;letter-spacing:1.02px;">$ 16294.13</div>
<div style="position:absolute;left:2474px;top:615px;width:60px;height:10px;background:transparent;box-sizing:border-box;border:2px solid #cfcfcf;"></div>
<div style="position:absolute;left:2478px;top:618px;width:44px;height:4px;background:#a4b8d2;"></div>
<svg style="position:absolute;left:2477px;top:625px;" width="3" height="476.5"><line x1="1.6" y1="0" x2="1.6" y2="476.5" stroke="#96aed0" stroke-width="1.8" stroke-dasharray="3.5 2.5"/></svg>
<div style="position:absolute;left:2558px;top:417px;width:400px;height:692px;background:#fff;box-shadow:2px 2px 4px rgba(0,0,0,0.10);"></div>
<div class="t" style="left:2576.5px;top:447.3px;font-size:18px;line-height:18px;color:#286f98;letter-spacing:0.75px;">Abc</div>
<svg style="position:absolute;left:2917.15px;top:440px;" width="24" height="30" viewBox="2917.15 440 24 30"><g fill="none" stroke="#5a5a5a" stroke-width="1.6"><ellipse cx="2929.15" cy="451.95" rx="6.05" ry="6.95"/><path d="M2925.20 463H2932.60M2927.00 466.9H2930.70"/></g></svg>
<div class="t" style="left:2576.3px;top:496.0px;font-size:23px;line-height:23px;color:#1f1f1f;font-weight:bold;letter-spacing:0.28px;">Sales at Half Price</div>
<div class="t" style="left:2797.9px;top:496.2px;font-size:21px;line-height:21px;color:#8a8a8a;letter-spacing:-0.60px;">1K</div>
<div style="position:absolute;left:2570px;top:541px;width:376px;height:2px;background:#d3d3d3;"></div>
<div style="position:absolute;left:2574px;top:619px;width:292px;height:36px;background:#e0e0e0;"></div>
<div class="t" style="left:2580.6px;top:626.6px;font-size:23.5px;line-height:23.5px;color:#858585;font-style:italic;letter-spacing:1.30px;">null</div>
<div style="position:absolute;left:2574px;top:659px;width:2px;height:36px;background:#dadada;"></div>
<div class="t" style="left:2580.7px;top:666.6px;font-size:23.5px;line-height:23.5px;color:#2e2e2e;letter-spacing:1.02px;">$ 1005.00</div>
<div style="position:absolute;left:2574px;top:699px;width:2px;height:36px;background:#dadada;"></div>
<div class="t" style="left:2580.7px;top:706.6px;font-size:23.5px;line-height:23.5px;color:#2e2e2e;letter-spacing:1.02px;">$ 104.00</div>
<div style="position:absolute;left:2574px;top:739px;width:2px;height:36px;background:#dadada;"></div>
<div class="t" style="left:2580.7px;top:746.6px;font-size:23.5px;line-height:23.5px;color:#2e2e2e;letter-spacing:1.02px;">$ 1095.00</div>
<div style="position:absolute;left:2574px;top:779px;width:2px;height:36px;background:#dadada;"></div>
<div class="t" style="left:2580.7px;top:786.6px;font-size:23.5px;line-height:23.5px;color:#2e2e2e;letter-spacing:1.02px;">$ 1112.00</div>
<div style="position:absolute;left:2574px;top:819px;width:2px;height:36px;background:#dadada;"></div>
<div class="t" style="left:2580.7px;top:826.6px;font-size:23.5px;line-height:23.5px;color:#2e2e2e;letter-spacing:1.02px;">$ 112.00</div>
<div style="position:absolute;left:2574px;top:859px;width:2px;height:36px;background:#dadada;"></div>
<div class="t" style="left:2580.7px;top:866.6px;font-size:23.5px;line-height:23.5px;color:#2e2e2e;letter-spacing:1.02px;">$ 1132.50</div>
<div style="position:absolute;left:2574px;top:899px;width:2px;height:36px;background:#dadada;"></div>
<div class="t" style="left:2580.7px;top:906.6px;font-size:23.5px;line-height:23.5px;color:#2e2e2e;letter-spacing:1.02px;">$ 1138.86</div>
<div style="position:absolute;left:2574px;top:939px;width:2px;height:36px;background:#dadada;"></div>
<div class="t" style="left:2580.7px;top:946.6px;font-size:23.5px;line-height:23.5px;color:#2e2e2e;letter-spacing:1.02px;">$ 1183.00</div>
<div style="position:absolute;left:2574px;top:979px;width:2px;height:36px;background:#dadada;"></div>
<div class="t" style="left:2580.7px;top:986.6px;font-size:23.5px;line-height:23.5px;color:#2e2e2e;letter-spacing:1.02px;">$ 1230.00</div>
<div style="position:absolute;left:2574px;top:1019px;width:2px;height:36px;background:#dadada;"></div>
<div class="t" style="left:2580.7px;top:1026.6px;font-size:23.5px;line-height:23.5px;color:#2e2e2e;letter-spacing:1.02px;">$ 1232.00</div>
<div style="position:absolute;left:2574px;top:1059px;width:2px;height:36px;background:#dadada;"></div>
<div class="t" style="left:2580.7px;top:1066.6px;font-size:23.5px;line-height:23.5px;color:#2e2e2e;letter-spacing:1.02px;">$ 1324.44</div>
<div style="position:absolute;left:2886px;top:615px;width:60px;height:10px;background:transparent;box-sizing:border-box;border:2px solid #cfcfcf;"></div>
<div style="position:absolute;left:2890px;top:618px;width:44px;height:4px;background:#a4b8d2;"></div>
<svg style="position:absolute;left:2889px;top:625px;" width="3" height="446.5"><line x1="1.6" y1="0" x2="1.6" y2="446.5" stroke="#96aed0" stroke-width="1.8" stroke-dasharray="3.5 2.5"/></svg>
<div style="position:absolute;left:2970px;top:417px;width:400px;height:692px;background:#fff;box-shadow:2px 2px 4px rgba(0,0,0,0.10);"></div>
<div class="t" style="left:2988.5px;top:447.3px;font-size:18px;line-height:18px;color:#286f98;letter-spacing:0.75px;">Abc</div>
<div class="t" style="left:2988.3px;top:496.0px;font-size:23px;line-height:23px;color:#1f1f1f;font-weight:bold;letter-spacing:0.35px;">Sales at Quarter Price</div>
<div class="t" style="left:3251.9px;top:496.2px;font-size:21px;line-height:21px;color:#8a8a8a;letter-spacing:-0.60px;">1K</div>
<div style="position:absolute;left:2982px;top:541px;width:376px;height:2px;background:#d3d3d3;"></div>
<div style="position:absolute;left:2986px;top:619px;width:292px;height:36px;background:#e0e0e0;"></div>
<div class="t" style="left:2992.6px;top:626.6px;font-size:23.5px;line-height:23.5px;color:#858585;font-style:italic;letter-spacing:1.30px;">null</div>
<div style="position:absolute;left:2986px;top:659px;width:2px;height:36px;background:#dadada;"></div>
<div class="t" style="left:2992.7px;top:666.6px;font-size:23.5px;line-height:23.5px;color:#2e2e2e;letter-spacing:1.02px;">$ 0.00</div>
<div style="position:absolute;left:2986px;top:699px;width:2px;height:36px;background:#dadada;"></div>
<div class="t" style="left:2992.7px;top:706.6px;font-size:23.5px;line-height:23.5px;color:#2e2e2e;letter-spacing:1.02px;">$ 1007.25</div>
<div style="position:absolute;left:2986px;top:739px;width:2px;height:36px;background:#dadada;"></div>
<div class="t" style="left:2992.7px;top:746.6px;font-size:23.5px;line-height:23.5px;color:#2e2e2e;letter-spacing:1.02px;">$ 1028.50</div>
<div style="position:absolute;left:2986px;top:779px;width:2px;height:36px;background:#dadada;"></div>
<div class="t" style="left:2992.7px;top:786.6px;font-size:23.5px;line-height:23.5px;color:#2e2e2e;letter-spacing:1.02px;">$ 1045.50</div>
<div style="position:absolute;left:2986px;top:819px;width:2px;height:36px;background:#dadada;"></div>
<div class="t" style="left:2992.7px;top:826.6px;font-size:23.5px;line-height:23.5px;color:#2e2e2e;letter-spacing:1.02px;">$ 105.00</div>
<div style="position:absolute;left:2986px;top:859px;width:2px;height:36px;background:#dadada;"></div>
<div class="t" style="left:2992.7px;top:866.6px;font-size:23.5px;line-height:23.5px;color:#2e2e2e;letter-spacing:1.02px;">$ 1065.00</div>
<div style="position:absolute;left:2986px;top:899px;width:2px;height:36px;background:#dadada;"></div>
<div class="t" style="left:2992.7px;top:906.6px;font-size:23.5px;line-height:23.5px;color:#2e2e2e;letter-spacing:1.02px;">$ 11.25</div>
<div style="position:absolute;left:2986px;top:939px;width:2px;height:36px;background:#dadada;"></div>
<div class="t" style="left:2992.7px;top:946.6px;font-size:23.5px;line-height:23.5px;color:#2e2e2e;letter-spacing:1.02px;">$ 110.00</div>
<div style="position:absolute;left:2986px;top:979px;width:2px;height:36px;background:#dadada;"></div>
<div class="t" style="left:2992.7px;top:986.6px;font-size:23.5px;line-height:23.5px;color:#2e2e2e;letter-spacing:1.02px;">$ 112.00</div>
<div style="position:absolute;left:2986px;top:1019px;width:2px;height:36px;background:#dadada;"></div>
<div class="t" style="left:2992.7px;top:1026.6px;font-size:23.5px;line-height:23.5px;color:#2e2e2e;letter-spacing:1.02px;">$ 1185.00</div>
<div style="position:absolute;left:2986px;top:1059px;width:2px;height:36px;background:#dadada;"></div>
<div class="t" style="left:2992.7px;top:1066.6px;font-size:23.5px;line-height:23.5px;color:#2e2e2e;letter-spacing:1.02px;">$ 1195.00</div>
<div style="position:absolute;left:3298px;top:615px;width:60px;height:10px;background:transparent;box-sizing:border-box;border:2px solid #cfcfcf;"></div>
<div style="position:absolute;left:3302px;top:618px;width:44px;height:4px;background:#a4b8d2;"></div>
<svg style="position:absolute;left:3301px;top:625px;" width="3" height="476.5"><line x1="1.6" y1="0" x2="1.6" y2="476.5" stroke="#96aed0" stroke-width="1.8" stroke-dasharray="3.5 2.5"/></svg>
<div style="position:absolute;left:3170px;top:405px;width:30px;height:718px;background:#efefef;"></div>
<svg style="position:absolute;left:3178px;top:416px;" width="16" height="10" viewBox="0 0 16 10"><path d="M1 8h14L8 1z" fill="#555"/></svg>
<div style="position:absolute;left:3178px;top:435px;width:16px;height:655px;background:#c1c1c1;"></div>
<svg style="position:absolute;left:3178px;top:1102px;" width="16" height="10" viewBox="0 0 16 10"><path d="M1 1h14L8 8z" fill="#555"/></svg>
<div style="position:absolute;left:491.5px;top:1123px;width:2678.5px;height:30px;background:#efefef;"></div>
<svg style="position:absolute;left:501px;top:1131px;" width="10" height="15" viewBox="0 0 10 15"><path d="M9 1v13L1 7.5z" fill="#555"/></svg>
<div style="position:absolute;left:522px;top:1131px;width:2431px;height:16px;background:#c1c1c1;"></div>
<svg style="position:absolute;left:3150px;top:1131px;" width="10" height="15" viewBox="0 0 10 15"><path d="M1 1v13l8-6.5z" fill="#555"/></svg>
<div style="position:absolute;left:3170px;top:1123px;width:30px;height:30px;background:#ffffff;"></div>
<div style="position:absolute;left:491.5px;top:1153px;width:2708.5px;height:2px;background:#d3d3d3;"></div>
<div style="position:absolute;left:491.5px;top:1155px;width:2708.5px;height:343px;background:#f4f4f4;"></div>
<div style="position:absolute;left:491.5px;top:1155px;width:1308.5px;height:343px;background:#ffffff;"></div>
<div style="position:absolute;left:491.5px;top:1219px;width:1308.5px;height:48px;background:#f4f4f4;"></div>
<div style="position:absolute;left:491.5px;top:1315px;width:1308.5px;height:48px;background:#f4f4f4;"></div>
<div style="position:absolute;left:491.5px;top:1411px;width:1308.5px;height:48px;background:#f4f4f4;"></div>
<div style="position:absolute;left:495.5px;top:1159px;width:143px;height:59px;background:#e0e0e0;"></div>
<div style="position:absolute;left:491.5px;top:1217px;width:1308.5px;height:2px;background:#d6d6d6;"></div>
<div style="position:absolute;left:771px;top:1155px;width:2px;height:343px;background:#d6d6d6;"></div>
<div style="position:absolute;left:894px;top:1155px;width:2px;height:343px;background:#d6d6d6;"></div>
<div style="position:absolute;left:1045px;top:1155px;width:2px;height:343px;background:#d6d6d6;"></div>
<div style="position:absolute;left:1277px;top:1155px;width:2px;height:343px;background:#d6d6d6;"></div>
<div style="position:absolute;left:1515px;top:1155px;width:2px;height:343px;background:#d6d6d6;"></div>
<div style="position:absolute;left:1799px;top:1155px;width:2px;height:343px;background:#d6d6d6;"></div>
<div style="position:absolute;left:491.5px;top:1155px;width:151.5px;height:343px;background:transparent;box-sizing:border-box;border:4px solid #3b98de;border-bottom:none;"></div>
<div class="t" style="left:507.5px;top:1180.0px;font-size:23px;line-height:23px;color:#1f1f1f;font-weight:bold;letter-spacing:1.22px;">Date-1</div>
<div class="t" style="left:655.7px;top:1175.7px;font-size:23px;line-height:23px;color:#1f1f1f;font-weight:bold;letter-spacing:0.05px;">Costume</div>
<div class="t" style="left:785.5px;top:1175.7px;font-size:23px;line-height:23px;color:#1f1f1f;font-weight:bold;letter-spacing:0.45px;">Country</div>
<div class="t" style="left:907.5px;top:1175.7px;font-size:23px;line-height:23px;color:#1f1f1f;font-weight:bold;letter-spacing:0.49px;">Date</div>
<div class="t" style="left:1059.0px;top:1176.4px;font-size:23px;line-height:23px;color:#1f1f1f;font-weight:bold;letter-spacing:0.11px;">Sales at Full Price</div>
<div class="t" style="left:1291.3px;top:1176.4px;font-size:23px;line-height:23px;color:#1f1f1f;font-weight:bold;letter-spacing:0.34px;">Sales at Half Price</div>
<div class="t" style="left:1529.3px;top:1176.4px;font-size:23px;line-height:23px;color:#1f1f1f;font-weight:bold;letter-spacing:0.35px;">Sales at Quarter Price</div>
<div class="t" style="left:502.1px;top:1232.2px;font-size:23.5px;line-height:23.5px;color:#2e2e2e;letter-spacing:1.65px;">01/10/2019</div>
<div class="t" style="left:649.6px;top:1232.2px;font-size:23.5px;line-height:23.5px;color:#2e2e2e;letter-spacing:1.06px;">Cat</div>
<div class="t" style="left:780.9px;top:1232.2px;font-size:23.5px;line-height:23.5px;color:#2e2e2e;letter-spacing:1.06px;">Australia</div>
<div class="t" style="left:901.8px;top:1232.2px;font-size:23.5px;line-height:23.5px;color:#2e2e2e;letter-spacing:1.65px;">01/10/2019</div>
<div class="t" style="left:1053.5px;top:1232.2px;font-size:23.5px;line-height:23.5px;color:#2e2e2e;letter-spacing:1.06px;">A$ 46660.55</div>
<div class="t" style="left:1285.6px;top:1232.2px;font-size:23.5px;line-height:23.5px;color:#2e2e2e;font-style:italic;letter-spacing:1.20px;">null</div>
<div class="t" style="left:1524.0px;top:1232.2px;font-size:23.5px;line-height:23.5px;color:#2e2e2e;font-style:italic;letter-spacing:1.20px;">null</div>
<div class="t" style="left:502.1px;top:1280.2px;font-size:23.5px;line-height:23.5px;color:#2e2e2e;letter-spacing:1.65px;">01/10/2020</div>
<div class="t" style="left:649.6px;top:1280.2px;font-size:23.5px;line-height:23.5px;color:#2e2e2e;letter-spacing:1.06px;">Cat</div>
<div class="t" style="left:780.9px;top:1280.2px;font-size:23.5px;line-height:23.5px;color:#2e2e2e;letter-spacing:1.06px;">Australia</div>
<div class="t" style="left:901.8px;top:1280.2px;font-size:23.5px;line-height:23.5px;color:#2e2e2e;letter-spacing:1.65px;">01/10/2020</div>
<div class="t" style="left:1053.5px;top:1280.2px;font-size:23.5px;line-height:23.5px;color:#2e2e2e;letter-spacing:1.06px;">A$ 47476.21</div>
<div class="t" style="left:1285.6px;top:1280.2px;font-size:23.5px;line-height:23.5px;color:#2e2e2e;font-style:italic;letter-spacing:1.20px;">null</div>
<div class="t" style="left:1524.0px;top:1280.2px;font-size:23.5px;line-height:23.5px;color:#2e2e2e;font-style:italic;letter-spacing:1.20px;">null</div>
<div class="t" style="left:502.1px;top:1328.2px;font-size:23.5px;line-height:23.5px;color:#2e2e2e;letter-spacing:1.65px;">01/11/2018</div>
<div class="t" style="left:649.6px;top:1328.2px;font-size:23.5px;line-height:23.5px;color:#2e2e2e;letter-spacing:1.06px;">Cat</div>
<div class="t" style="left:780.9px;top:1328.2px;font-size:23.5px;line-height:23.5px;color:#2e2e2e;letter-spacing:1.06px;">Australia</div>
<div class="t" style="left:901.8px;top:1328.2px;font-size:23.5px;line-height:23.5px;color:#2e2e2e;letter-spacing:1.65px;">01/11/2018</div>
<div class="t" style="left:1053.2px;top:1328.2px;font-size:23.5px;line-height:23.5px;color:#2e2e2e;font-style:italic;letter-spacing:1.20px;">null</div>
<div class="t" style="left:1285.9px;top:1328.2px;font-size:23.5px;line-height:23.5px;color:#2e2e2e;letter-spacing:1.06px;">A$ 2076.00</div>
<div class="t" style="left:1524.0px;top:1328.2px;font-size:23.5px;line-height:23.5px;color:#2e2e2e;font-style:italic;letter-spacing:1.20px;">null</div>
<div class="t" style="left:502.1px;top:1376.2px;font-size:23.5px;line-height:23.5px;color:#2e2e2e;letter-spacing:1.65px;">01/11/2019</div>
<div class="t" style="left:649.6px;top:1376.2px;font-size:23.5px;line-height:23.5px;color:#2e2e2e;letter-spacing:1.06px;">Cat</div>
<div class="t" style="left:780.9px;top:1376.2px;font-size:23.5px;line-height:23.5px;color:#2e2e2e;letter-spacing:1.06px;">Australia</div>
<div class="t" style="left:901.8px;top:1376.2px;font-size:23.5px;line-height:23.5px;color:#2e2e2e;letter-spacing:1.65px;">01/11/2019</div>
<div class="t" style="left:1053.2px;top:1376.2px;font-size:23.5px;line-height:23.5px;color:#2e2e2e;font-style:italic;letter-spacing:1.20px;">null</div>
<div class="t" style="left:1285.9px;top:1376.2px;font-size:23.5px;line-height:23.5px;color:#2e2e2e;letter-spacing:1.06px;">A$ 5964.00</div>
<div class="t" style="left:1524.0px;top:1376.2px;font-size:23.5px;line-height:23.5px;color:#2e2e2e;font-style:italic;letter-spacing:1.20px;">null</div>
<div class="t" style="left:502.1px;top:1424.2px;font-size:23.5px;line-height:23.5px;color:#2e2e2e;letter-spacing:1.65px;">02/10/2019</div>
<div class="t" style="left:649.6px;top:1424.2px;font-size:23.5px;line-height:23.5px;color:#2e2e2e;letter-spacing:1.06px;">Cat</div>
<div class="t" style="left:780.9px;top:1424.2px;font-size:23.5px;line-height:23.5px;color:#2e2e2e;letter-spacing:1.06px;">Australia</div>
<div class="t" style="left:901.8px;top:1424.2px;font-size:23.5px;line-height:23.5px;color:#2e2e2e;letter-spacing:1.65px;">02/10/2019</div>
<div class="t" style="left:1053.5px;top:1424.2px;font-size:23.5px;line-height:23.5px;color:#2e2e2e;letter-spacing:1.06px;">A$ 55920.69</div>
<div class="t" style="left:1285.6px;top:1424.2px;font-size:23.5px;line-height:23.5px;color:#2e2e2e;font-style:italic;letter-spacing:1.20px;">null</div>
<div class="t" style="left:1524.0px;top:1424.2px;font-size:23.5px;line-height:23.5px;color:#2e2e2e;font-style:italic;letter-spacing:1.20px;">null</div>
<div class="t" style="left:502.1px;top:1472.2px;font-size:23.5px;line-height:23.5px;color:#2e2e2e;letter-spacing:1.65px;">02/10/2020</div>
<div class="t" style="left:649.6px;top:1472.2px;font-size:23.5px;line-height:23.5px;color:#2e2e2e;letter-spacing:1.06px;">Cat</div>
<div class="t" style="left:780.9px;top:1472.2px;font-size:23.5px;line-height:23.5px;color:#2e2e2e;letter-spacing:1.06px;">Australia</div>
<div class="t" style="left:901.8px;top:1472.2px;font-size:23.5px;line-height:23.5px;color:#2e2e2e;letter-spacing:1.65px;">02/10/2020</div>
<div class="t" style="left:1053.5px;top:1472.2px;font-size:23.5px;line-height:23.5px;color:#2e2e2e;letter-spacing:1.06px;">A$ 63189.66</div>
<div class="t" style="left:1285.6px;top:1472.2px;font-size:23.5px;line-height:23.5px;color:#2e2e2e;font-style:italic;letter-spacing:1.20px;">null</div>
<div class="t" style="left:1524.0px;top:1472.2px;font-size:23.5px;line-height:23.5px;color:#2e2e2e;font-style:italic;letter-spacing:1.20px;">null</div>
<div style="position:absolute;left:3170px;top:1219px;width:30px;height:279px;background:#eeeeee;"></div>
<svg style="position:absolute;left:3178px;top:1230px;" width="16" height="10" viewBox="0 0 16 10"><path d="M1 8h14L8 1z" fill="#555"/></svg>
<div style="position:absolute;left:3178px;top:1249px;width:16px;height:34px;background:#c1c1c1;"></div>
</body></html>
